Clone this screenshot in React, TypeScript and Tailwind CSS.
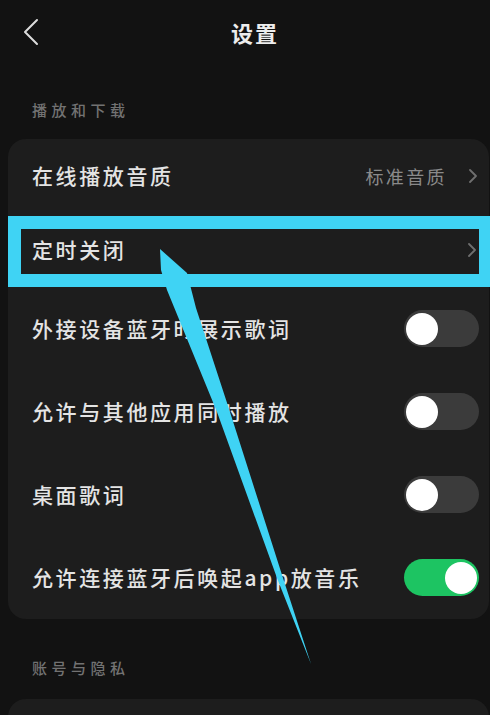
import React from 'react';

const FONT = { fontFamily: '"Noto Sans CJK SC", "Noto Sans", sans-serif' };

const Chevron = () => (
  <svg width="8" height="14" viewBox="0 0 8 14" fill="none">
    <path d="M1 1l6 6-6 6" stroke="#6f6f6f" strokeWidth="1.8" strokeLinecap="round" strokeLinejoin="round" />
  </svg>
);

const Toggle = ({ on }: { on?: boolean }) => (
  <div
    className={`w-[75px] h-[37px] rounded-full flex items-center px-[2px] ${
      on ? 'bg-[#1dc462] justify-end' : 'bg-[#3b3b3b] justify-start'
    }`}
  >
    <div className="w-[32px] h-[32px] rounded-full bg-white" />
  </div>
);

const rows = [
  { label: '外接设备蓝牙时展示歌词', on: false },
  { label: '允许与其他应用同时播放', on: false },
  { label: '桌面歌词', on: false },
  { label: '允许连接蓝牙后唤起app放音乐', on: true },
];

export default function App() {
  return (
    <div className="relative w-[490px] h-[715px] overflow-hidden bg-[#121212]" style={FONT}>
      {/* Header */}
      <div className="relative h-[64px] flex items-center justify-center pl-[20px]">
        <svg className="absolute left-[22px] top-[18px]" width="18" height="28" viewBox="0 0 18 28" fill="none">
          <path d="M15 2L3 14l12 12" stroke="#dcdcdc" strokeWidth="2" strokeLinecap="round" strokeLinejoin="round" />
        </svg>
        <span className="text-[22px] font-bold tracking-[2px] text-[#ececec]">设置</span>
      </div>

      {/* 播放和下载 */}
      <div className="pt-[36px] mb-[19px] pl-[32px] h-[56px] flex items-end">
        <span className="text-[15px] leading-[20px] tracking-[4.5px] font-medium text-[#727272]">播放和下载</span>
      </div>

      <div className="ml-[8px] mr-[1px] rounded-[18px] bg-[#1d1d1d]">
        <div className="h-[74px] flex items-center justify-between pl-[24px] pr-[12px]">
          <span className="text-[21px] tracking-[2.6px] font-medium text-[#e4e4e4]">在线播放音质</span>
          <div className="flex items-center gap-[22px]">
            <span className="text-[18px] tracking-[2.4px] text-[#8a8a8a]">标准音质</span>
            <Chevron />
          </div>
        </div>
        <div className="h-[74px] flex items-center justify-between pl-[24px] pr-[13px]">
          <span className="text-[21px] tracking-[2.6px] font-medium text-[#e4e4e4]">定时关闭</span>
          <Chevron />
        </div>
        {rows.map((r) => (
          <div key={r.label} className="h-[83px] flex items-center justify-between pl-[24px] pr-[10px]">
            <span className="text-[21px] tracking-[2.6px] font-medium text-[#e4e4e4]">{r.label}</span>
            <Toggle on={r.on} />
          </div>
        ))}
      </div>

      {/* 账号与隐私 */}
      <div className="mt-[36px] mb-[20px] pl-[32px]">
        <span className="text-[15px] leading-[20px] tracking-[4.5px] font-medium text-[#727272]">账号与隐私</span>
      </div>
      <div className="ml-[8px] mr-[1px] h-[120px] rounded-[18px] bg-[#1d1d1d]" />

      {/* Annotation: highlight box */}
      <div className="absolute left-[8px] top-[216px] w-[484px] h-[71px] border-[13px] border-[#3fd3f4]" />

      {/* Annotation: arrow */}
      <svg className="absolute left-0 top-0" width="490" height="715" viewBox="0 0 490 715">
        <polygon
          points="160,249 187,273 196,308 230,412 283,578 311,664 277,578 217,412 167,290 161,270"
          fill="#3fd3f4"
        />
      </svg>
    </div>
  );
}
